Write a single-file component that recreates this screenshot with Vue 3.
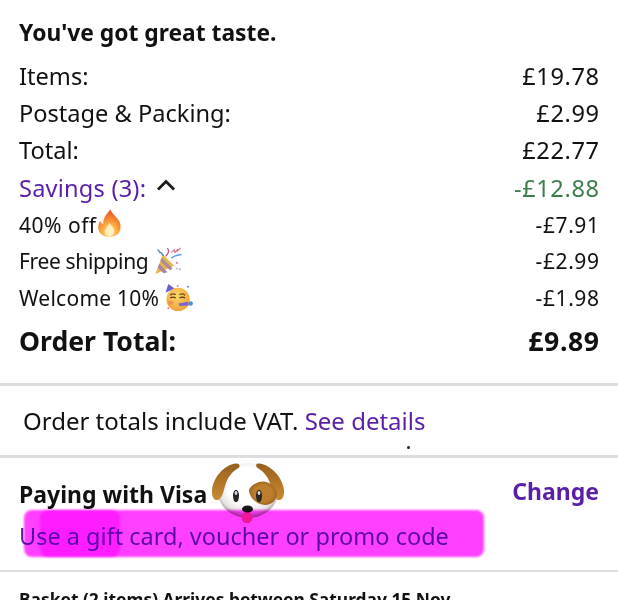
<template>
  <div class="page">
    <section class="summary">
      <h2 class="title">You've got great taste.</h2>
      <div class="row"><span>Items:</span><span class="num">£19.78</span></div>
      <div class="row"><span>Postage &amp; Packing:</span><span class="num">£2.99</span></div>
      <div class="row"><span>Total:</span><span class="num">£22.77</span></div>
      <div class="row">
        <span class="savings">
          Savings (3):
          <svg class="chevron" width="20" height="12" viewBox="0 0 20 12">
            <path d="M2 10.5 L10 2.5 L18 10.5" fill="none" stroke="#1b1b1b" stroke-width="2.8" />
          </svg>
        </span>
        <span class="num green">-£12.88</span>
      </div>
      <div class="row small">
        <span class="with-emoji off">40% off
          <svg class="fire" width="25" height="28" viewBox="0 0 24 27">
            <defs>
              <radialGradient id="fireGrad" cx="0.5" cy="0.85" r="0.85">
                <stop offset="0" stop-color="#ffe9a8" />
                <stop offset="0.35" stop-color="#ffb347" />
                <stop offset="0.75" stop-color="#f4702a" />
                <stop offset="1" stop-color="#e4522a" />
              </radialGradient>
            </defs>
            <path d="M13 0.5 C14.5 5 19 7.5 21.5 12 C24 17 22.5 23 18 25.5 C14.5 27.3 8.5 27.3 5 25 C0.5 22 0 16 3 11.5 C3.6 13 4.5 14 6 14.5 C5.5 9 9 5 13 0.5 Z" fill="url(#fireGrad)" />
            <path d="M12 13 C13 16 17 18 16.5 22 C16 25 14 26 12 26 C9.5 26 7.5 24.5 7.5 22 C7.5 19 11 17 12 13 Z" fill="#fff0c4" />
          </svg>
        </span>
        <span class="num">-£7.91</span>
      </div>
      <div class="row small">
        <span class="with-emoji gap shipping">Free shipping
          <svg class="popper" width="29" height="28" viewBox="0 0 30 30">
            <path d="M1 29 L9 8 L21 20 Z" fill="#e8b44a" />
            <path d="M5 18 L14 27 L9.5 28 L3.4 22 Z M7.6 11.5 L19.5 23 L16.5 24.8 L6.3 15 Z" fill="#a78a9f" />
            <path d="M12 10 C15 6 16 5 14 1" fill="none" stroke="#c05a7a" stroke-width="1.4" />
            <path d="M3 3 C6 3 4 6 7 6 C9 6 7 9 10 9" fill="none" stroke="#4a7fd0" stroke-width="1.4" />
            <path d="M18 12 C22 8 25 9 29 8" fill="none" stroke="#5a9be0" stroke-width="1.6" />
            <path d="M18 6 L21 3 L22 6 L25 2 M24 5 L28 1" fill="none" stroke="#d8708a" stroke-width="1.2" />
            <circle cx="24" cy="17" r="1.3" fill="#e58aa0" />
            <circle cx="27" cy="24" r="1.1" fill="#e58aa0" />
            <circle cx="24" cy="23" r="0.9" fill="#7ab0e0" />
          </svg>
        </span>
        <span class="num">-£2.99</span>
      </div>
      <div class="row small">
        <span class="with-emoji gap welcome">Welcome 10%
          <svg class="party" width="29" height="28" viewBox="0 0 30 30">
            <defs>
              <radialGradient id="faceGrad" cx="0.45" cy="0.35" r="0.7">
                <stop offset="0" stop-color="#fbd766" />
                <stop offset="1" stop-color="#ee9e3a" />
              </radialGradient>
            </defs>
            <path d="M0 9 L3 0 L10 5 Z" fill="#6a5fd0" />
            <circle cx="13.5" cy="16.5" r="12.5" fill="url(#faceGrad)" />
            <path d="M5 12 Q8 9.5 11 11.5 M15 11.5 Q18 9.5 21 12" fill="none" stroke="#6b4a1e" stroke-width="1.2" />
            <path d="M5 15 Q8 13 11 15 M15 15 Q18 13 21 15" fill="none" stroke="#5a3c16" stroke-width="1.4" />
            <ellipse cx="5.5" cy="20" rx="3" ry="2" fill="#f2785a" opacity="0.6" />
            <path d="M14 21 L24 19 L25 23 L15 23.5 Z" fill="#7a64d8" />
            <circle cx="27" cy="21" r="2.4" fill="#4e8ddb" />
            <circle cx="24" cy="3" r="1.1" fill="#5a8fdc" />
            <circle cx="13" cy="2" r="1" fill="#e6678a" />
            <circle cx="3" cy="26" r="1" fill="#e6678a" />
          </svg>
        </span>
        <span class="num">-£1.98</span>
      </div>
      <div class="row order-total"><span>Order Total:</span><span class="num">£9.89</span></div>
    </section>

    <div class="rule thick"></div>
    <p class="vat">Order totals include VAT. <span class="link">See details</span></p>
    <div class="rule thick"></div>

    <section class="payment">
      <div class="pay-top">
        <span class="paying">Paying with Visa</span>
        <span class="change">Change</span>
      </div>
      <div class="promo">Use a gift card, voucher or promo code</div>

      <svg class="dog" width="74" height="62" viewBox="0 0 74 62">
        <defs>
          <radialGradient id="dogHead" cx="0.5" cy="0.42" r="0.56">
            <stop offset="0.6" stop-color="#ffffff" />
            <stop offset="0.88" stop-color="#e6e2e2" />
            <stop offset="1" stop-color="#aaa4a4" />
          </radialGradient>
          <linearGradient id="dogEar" x1="0" y1="0" x2="0" y2="1">
            <stop offset="0" stop-color="#96601e" />
            <stop offset="1" stop-color="#c98a30" />
          </linearGradient>
          <radialGradient id="dogPatch" cx="0.5" cy="0.5" r="0.6">
            <stop offset="0.55" stop-color="#bc7e2c" />
            <stop offset="1" stop-color="#8e5a1c" />
          </radialGradient>
        </defs>
        <ellipse cx="36" cy="28.5" rx="30.5" ry="27.5" fill="url(#dogHead)" />
        <path d="M24 1.5 C12 2.5 1 16 0 28 C-0.5 36 3 39.5 7 37.5 C11 35 11.5 28 14 21 C16.5 14 21 9 27 5.5 C28.5 3.5 27 1.2 24 1.5 Z" fill="url(#dogEar)" />
        <path d="M47 1.5 C59 2.5 71 16 72 28 C72.5 36 69 39.5 65 37.5 C61 35 60.5 28 58 21 C55.5 14 51 9 45 5.5 C43.5 3.5 44 1.2 47 1.5 Z" fill="url(#dogEar)" />
        <path d="M47 20 C55 17.5 63 23 65 31 C65 38 60 43 53 43 C46 43 38 37 37 29 C37 25 42 21.5 47 20 Z" fill="url(#dogPatch)" />
        <ellipse cx="24" cy="34" rx="3" ry="6.2" fill="#2a2624" />
        <ellipse cx="47" cy="34" rx="3" ry="6.2" fill="#2a2624" />
        <ellipse cx="24" cy="31" rx="1.4" ry="2" fill="#d8d8d8" />
        <ellipse cx="47" cy="31" rx="1.4" ry="2" fill="#d8d8d8" />
        <path d="M35 50 C31.5 50 29.5 52.5 29.5 55.5 C29.5 59 32 61 35 61 C38 61 40.5 59 40.5 55.5 C40.5 52.5 38.5 50 35 50 Z" fill="#f0569a" />
        <ellipse cx="35.5" cy="47" rx="5.5" ry="3.6" fill="#1a1818" />
      </svg>

      <div class="marker"></div>
      <div class="marker darker"></div>
    </section>

    <div class="rule thin"></div>
    <p class="basket">Basket (2 items) Arrives between Saturday 15 Nov</p>

    <i class="speck"></i>
  </div>
</template>

<script setup>
</script>

<style>
html, body { background: #fff; }
</style>

<style scoped>
.page {
  position: relative;
  width: 618px;
  height: 600px;
  overflow: hidden;
  background: #fff;
  color: #111;
  font-family: "Noto Sans", "Open Sans", sans-serif;
}

.summary {
  padding: 18px 19px 0;
}

.title {
  margin: 0 0 9px;
  font-size: 22.8px;
  line-height: 30px;
  font-weight: 700;
}

.row {
  display: flex;
  justify-content: space-between;
  align-items: center;
  height: 37.3px;
  font-size: 23.6px;
}

.row.small {
  height: 36.7px;
  font-size: 21px;
}

.num { letter-spacing: 0.6px; margin-right: -0.6px; }

.savings {
  display: inline-flex;
  align-items: center;
  gap: 10px;
  color: #5a1fa8;
  letter-spacing: 0.2px;
}

.chevron { margin-top: -6px; }

.green { color: #3d7d4d; }

.with-emoji {
  display: inline-flex;
  align-items: center;
}

.with-emoji.gap { gap: 6px; }

.off { letter-spacing: 0.5px; }
.shipping { letter-spacing: -0.35px; }
.welcome { letter-spacing: 0.25px; }

.fire { margin-top: -4px; }

.order-total {
  height: 50px;
  font-size: 26.6px;
  font-weight: 700;
}

.rule { background: #ddd; }
.rule.thick { height: 3px; }
.rule.thin { height: 2px; }

.summary + .rule { margin-top: 17px; }

.vat {
  margin: 0;
  height: 69px;
  padding-left: 23px;
  line-height: 70px;
  font-size: 24px;
}

.link { color: #5a1fa8; }

.payment {
  position: relative;
  height: 112px;
  padding: 0 19px;
}

.pay-top {
  display: flex;
  justify-content: space-between;
  padding-top: 17px;
  line-height: 34px;
}

.paying {
  font-size: 23px;
  font-weight: 700;
  line-height: 38px;
}

.change {
  font-size: 23px;
  font-weight: 700;
  color: #5a1fa8;
  margin-top: -1px;
}

.promo {
  margin-top: 6px;
  font-size: 23.5px;
  line-height: 34px;
  color: #5a1fa8;
}

.dog {
  position: absolute;
  left: 212px;
  top: 4px;
}

.marker {
  position: absolute;
  left: 24px;
  top: 52px;
  width: 460px;
  height: 47px;
  border-radius: 8px;
  background: #ff40ff;
  mix-blend-mode: multiply;
  filter: blur(1px);
}

.marker.darker {
  left: 40px;
  width: 80px;
  background: #ff70ff;
}

.basket {
  margin: 0;
  padding: 14px 19px 0;
  font-size: 17.4px;
  line-height: 26px;
  font-weight: 700;
  white-space: nowrap;
}

.speck {
  position: absolute;
  left: 407px;
  top: 446px;
  width: 3px;
  height: 3px;
  border-radius: 50%;
  background: #222;
}
</style>
